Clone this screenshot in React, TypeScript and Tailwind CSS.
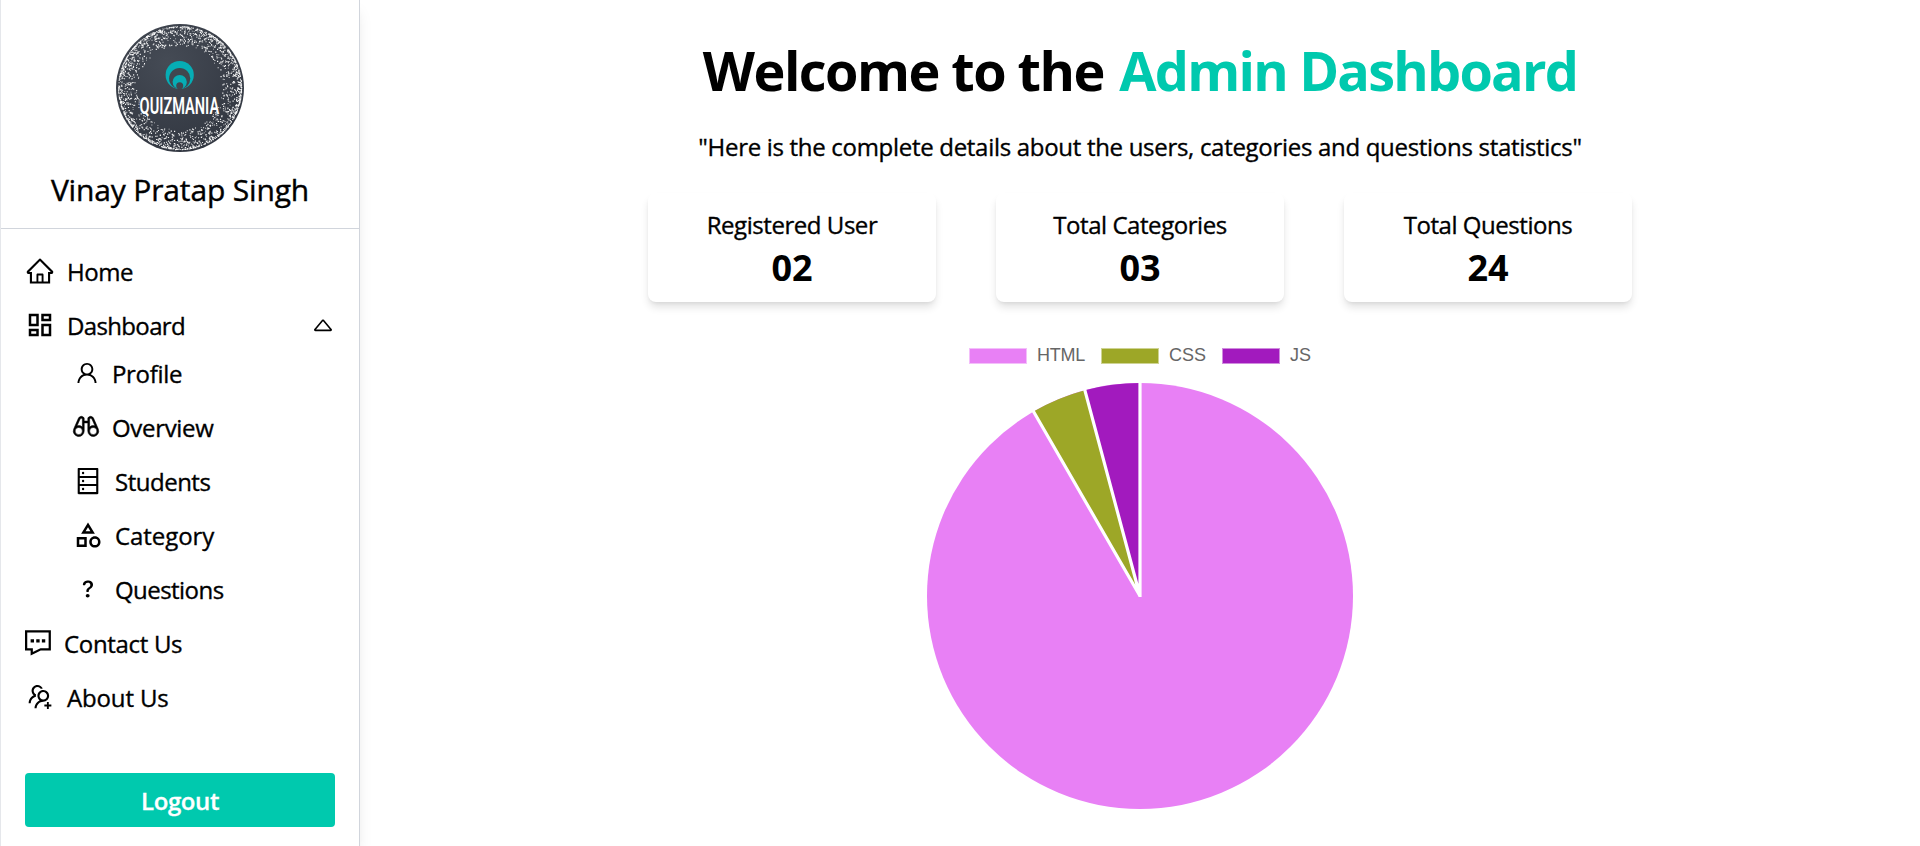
import type { ReactNode } from "react";
import {
  AiOutlineDatabase,
  AiOutlineHome,
  AiOutlineUser,
  AiOutlineUsergroupAdd,
} from "react-icons/ai";
import { MdOutlineCategory, MdOutlineDashboard } from "react-icons/md";
import { PiBinoculars } from "react-icons/pi";
import { BsQuestion } from "react-icons/bs";
import { GrContact } from "react-icons/gr";

// Deterministic dust around the rim of the badge, denser towards the edge.
function buildSpeckles(): string {
  let seed = 7;
  const next = () => {
    seed = (seed * 16807) % 2147483647;
    return seed / 2147483647;
  };
  let d = "";
  for (let i = 0; i < 2000; i++) {
    const radius = 61.5 - 19 * Math.pow(next(), 2.7);
    const angle = next() * Math.PI * 2;
    const size = 0.75 + next() * 0.5;
    const x = (63.6 + radius * Math.cos(angle)).toFixed(2);
    const y = (63.6 + radius * Math.sin(angle)).toFixed(2);
    const s = size.toFixed(2);
    d += `M${x} ${y}h${s}v${s}h-${s}z`;
  }
  return d;
}

const speckles = buildSpeckles();

function Logo() {
  return (
    <svg viewBox="0 0 128 128" className="size-32 overflow-visible">
      <defs>
        <radialGradient id="badge" cx="0.4" cy="0.3" r="0.8">
          <stop offset="0" stopColor="#454b55" />
          <stop offset="1" stopColor="#30353f" />
        </radialGradient>
      </defs>
      <circle cx="64" cy="64" r="64" fill="url(#badge)" />
      <path d={speckles} fill="#fff" fillOpacity="0.95" />
      <circle cx="63.7" cy="51" r="14.1" fill="#06adb5" />
      <circle cx="63.7" cy="54.6" r="10.6" fill="#40464f" />
      <circle cx="63.7" cy="58" r="7.1" fill="#06adb5" />
      <circle cx="63.7" cy="61.7" r="3.5" fill="#40464f" />
      <text
        x="23.6"
        y="89.8"
        textLength="79.5"
        lengthAdjust="spacingAndGlyphs"
        fill="#fff"
        className="font-['Roboto',sans-serif] text-[23.5px] font-semibold"
      >
        QUIZMANIA
      </text>
    </svg>
  );
}

function CaretUp() {
  return (
    <svg viewBox="0 0 20 14" className="mr-0.5 h-[14px] w-5" fill="none" stroke="black" strokeWidth="1.6" strokeLinejoin="round">
      <path d="M9.5 2.4a.7.7 0 0 1 1 0L18 11.4a.6.6 0 0 1-.5 1H2.5a.6.6 0 0 1-.5-1z" />
    </svg>
  );
}

interface RowProps {
  icon: ReactNode;
  label: string;
  className: string;
  children?: ReactNode;
}

function Row({ icon, label, className, children }: RowProps) {
  return (
    <li className={`flex items-center ${className}`}>
      {icon}
      <span className="pt-0.5 [-webkit-text-stroke:0.35px_black]">{label}</span>
      {children}
    </li>
  );
}

function Sidebar() {
  return (
    <aside className="flex w-[360px] shrink-0 flex-col border-x border-l-gray-200 border-r-gray-300 shadow-lg">
      <div className="flex h-[229px] flex-col items-center border-b border-gray-300 pt-6">
        <Logo />
        <p className="mt-5 text-[30px] leading-9 font-medium tracking-[-0.15px] [-webkit-text-stroke:0.4px_black]">
          Vinay Pratap Singh
        </p>
      </div>
      <ul className="px-6 pt-[15px] text-2xl font-medium">
        <Row className="h-[54px] gap-3 tracking-[-0.45px]" icon={<AiOutlineHome className="size-[30px]" />} label="Home" />
        <Row className="h-12 gap-3 pt-1.5 tracking-[-0.65px]" icon={<MdOutlineDashboard className="size-[30px]" />} label="Dashboard">
          <span className="ml-auto">
            <CaretUp />
          </span>
        </Row>
        <Row className="h-[54px] gap-3 pl-[49px] tracking-[-0.32px]" icon={<AiOutlineUser className="size-[26px]" />} label="Profile" />
        <Row
          className="h-[54px] gap-[11px] pl-[46px] tracking-[-0.32px]"
          icon={<PiBinoculars className="size-[30px] pb-px" strokeWidth={5} stroke="black" />}
          label="Overview"
        />
        <Row className="h-[54px] gap-3 pl-12 tracking-[-0.49px]" icon={<AiOutlineDatabase className="size-[30px]" />} label="Students" />
        <Row className="h-[54px] gap-3 pl-12 tracking-[-0.06px]" icon={<MdOutlineCategory className="size-[30px]" />} label="Category" />
        <Row className="h-[54px] gap-3 pl-12 tracking-[-0.55px]" icon={<BsQuestion className="size-[30px]" />} label="Questions" />
        <Row className="h-[54px] gap-3 tracking-[-0.32px]" icon={<GrContact className="mb-0.5 size-[27px]" />} label="Contact Us" />
        <Row className="h-[54px] gap-3 tracking-[-0.15px]" icon={<AiOutlineUsergroupAdd className="size-[30px]" />} label="About Us" />
      </ul>
      <button className="mx-6 mt-[49px] h-[54px] rounded bg-[#00c9ae] pt-0.5 text-2xl font-semibold tracking-[-0.4px] text-white [-webkit-text-stroke:0.3px_white]">
        Logout
      </button>
    </aside>
  );
}

const stats = [
  { label: "Registered User", value: "02" },
  { label: "Total Categories", value: "03" },
  { label: "Total Questions", value: "24" },
];

function PieChart() {
  return (
    <svg viewBox="-213 -213 426 426" className="mt-[19px] size-[426px]">
      <circle r="213" fill="#e880f5" />
      <path d="M0 0L-106.5 -184.46A213 213 0 0 1 -55.13 -205.74Z" fill="#9da727" />
      <path d="M0 0L-55.13 -205.74A213 213 0 0 1 0 -213Z" fill="#a21abe" />
      <path d="M0 -214V1M-107.5 -186.19L0 0M0 0L-55.64 -207.67" fill="none" stroke="#fff" strokeWidth="3.2" />
    </svg>
  );
}

export default function App() {
  return (
    <div className="flex h-[846px] overflow-hidden bg-white font-['Open_Sans','Noto_Sans',sans-serif] text-black">
      <Sidebar />
      <main className="flex flex-1 flex-col items-center pt-10">
        <h1 className="text-[54px] leading-[60px] font-bold tracking-[-1.54px]">
          Welcome to the <span className="ml-[3px] tracking-[-1.76px] text-[#00c9ae]">Admin Dashboard</span>
        </h1>
        <p className="mt-[31px] text-2xl font-medium tracking-[-0.3px] [-webkit-text-stroke:0.35px_black]">
          "Here is the complete details about the users, categories and questions statistics"
        </p>
        <section className="mt-[30px] flex gap-[60px]">
          {stats.map((s) => (
            <div
              key={s.label}
              className="flex h-[109px] w-72 flex-col items-center rounded-lg pt-4 shadow-[0_6px_9px_-1px_rgba(0,0,0,0.12),0_2px_4px_-2px_rgba(0,0,0,0.1)]"
            >
              <p className="text-2xl font-medium tracking-[-0.45px] [-webkit-text-stroke:0.35px_black]">{s.label}</p>
              <p className="mt-[7px] text-4xl font-bold">{s.value}</p>
            </div>
          ))}
        </section>
        <div className="mt-[46px] flex h-4 items-center font-['Liberation_Sans',Arial,sans-serif] text-[18px] text-[#666]">
          <span className="h-4 w-[58px] border border-[#f3bffa] bg-[#e880f5]" />
          <span className="ml-2.5 pb-0.5 tracking-[-0.2px]">HTML</span>
          <span className="ml-4 h-4 w-[58px] border border-[#ced393] bg-[#9da727]" />
          <span className="ml-2.5 pb-0.5">CSS</span>
          <span className="ml-4 h-4 w-[58px] border border-[#d08cde] bg-[#a21abe]" />
          <span className="ml-2.5 pb-0.5">JS</span>
        </div>
        <PieChart />
      </main>
    </div>
  );
}
